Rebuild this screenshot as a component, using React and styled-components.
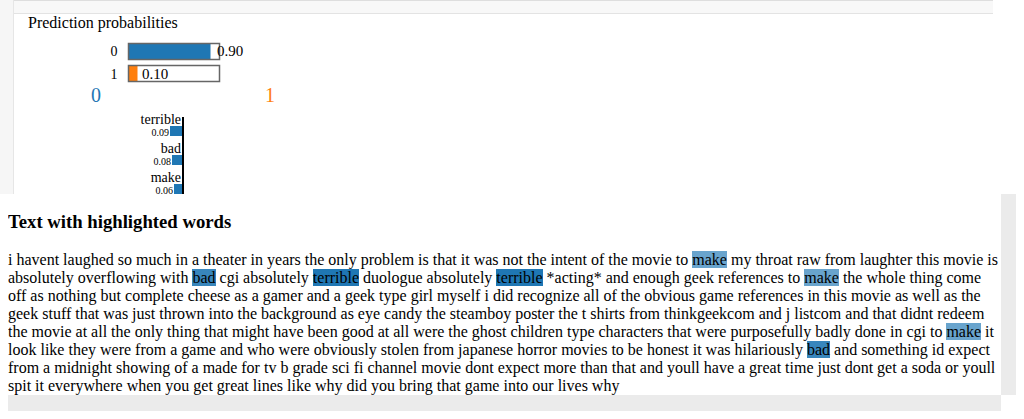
import React from "react";
import styled, { createGlobalStyle } from "styled-components";

const Global = createGlobalStyle`
  html, body { margin: 0; padding: 0; background: #ffffff; }
  body { font-family: "Liberation Serif", "Times New Roman", serif; color: #000; }
`;

const Page = styled.div`
  width: 1024px;
  height: 419px;
  overflow: hidden;
  display: flex;
  flex-direction: column;
`;

const Upper = styled.section`
  display: flex;
  height: 194px;
  flex-shrink: 0;
`;

const Gutter = styled.div`
  width: 14px;
  box-sizing: border-box;
  background: #f6f6f6;
  border-right: 1px solid #e6e6e6;
`;

const Main = styled.div`
  width: 979px;
  display: flex;
  flex-direction: column;
  background: #fff;
`;

const TopBar = styled.div`
  height: 14px;
  box-sizing: border-box;
  background: #f8f8f8;
  border-top: 1px solid #dedede;
  border-bottom: 1px solid #e3e3e3;
`;

const Title = styled.div`
  padding-left: 14px;
  font-size: 16px;
  line-height: 18px;
  height: 18px;
`;

const ChartSvg = styled.svg`
  display: block;
  overflow: visible;
  font-family: "Liberation Serif", "Times New Roman", serif;
`;

const Lower = styled.section`
  margin-left: 8px;
  display: grid;
  grid-template-columns: 993px 15px;
  grid-template-rows: 201px 16px;
`;

const TextPanel = styled.div`
  background: #fff;
  overflow: hidden;
`;

const Track = styled.div`
  background: ${(p) => (p.$corner ? "#fff" : "#ebebeb")};
`;

const Heading = styled.h3`
  margin: 17px 0 18px;
  font-size: 18.72px;
  line-height: 21.5px;
  font-weight: bold;
`;

const Body = styled.div`
  font-size: 16px;
  line-height: 18px;
`;

const Mark = styled.span`
  background-color: rgba(31, 119, 180, ${(p) => p.$alpha});
`;

const BLUE = "#1f77b4";
const ORANGE = "#ff7f0e";

function ProbChart() {
  return (
    <ChartSvg width="300" height="74">
      <text x="103.5" y="24" fontSize="14" textAnchor="end">0</text>
      <rect x="114.5" y="11.5" width="82" height="16" fill={BLUE} />
      <rect x="114.5" y="11.5" width="91" height="16" fill="none" stroke="#666" strokeWidth="1.5" />
      <text x="203" y="24" fontSize="15">0.90</text>
      <text x="103.5" y="47" fontSize="14" textAnchor="end">1</text>
      <rect x="114.5" y="33.5" width="9" height="16" fill={ORANGE} />
      <rect x="114.5" y="33.5" width="91" height="16" fill="none" stroke="#666" strokeWidth="1.5" />
      <text x="128" y="47" fontSize="15">0.10</text>
      <text x="77" y="70" fontSize="20" fill={BLUE}>0</text>
      <text x="251" y="70" fontSize="20" fill={ORANGE}>1</text>
    </ChartSvg>
  );
}

const features = [
  { name: "terrible", value: "0.09", w: 12 },
  { name: "bad", value: "0.08", w: 10 },
  { name: "make", value: "0.06", w: 8 },
];

function FeatureChart() {
  return (
    <ChartSvg width="300" height="88">
      {features.map((f, i) => {
        const y = i * 29;
        return (
          <g key={f.name}>
            <text x="167" y={18 + y} fontSize="14" textAnchor="end">{f.name}</text>
            <rect x={168 - f.w} y={20 + y} width={f.w} height="10" fill={BLUE} />
            <text x={167 - f.w} y={30 + y} fontSize="10" textAnchor="end">{f.value}</text>
          </g>
        );
      })}
      <line x1="169" y1="11" x2="169" y2="88" stroke="#000" strokeWidth="2" />
    </ChartSvg>
  );
}

const segments = [
  "i havent laughed so much in a theater in years the only problem is that it was not the intent of the movie to ",
  ["make", 0.67],
  " my throat raw from laughter this movie is absolutely overflowing with ",
  ["bad", 0.89],
  " cgi absolutely ",
  ["terrible", 1],
  " duologue absolutely ",
  ["terrible", 1],
  " *acting* and enough geek references to ",
  ["make", 0.67],
  " the whole thing come off as nothing but complete cheese as a gamer and a geek type girl myself i did recognize all of the obvious game references in this movie as well as the geek stuff that was just thrown into the background as eye candy the steamboy poster the t shirts from thinkgeekcom and j listcom and that didnt redeem the movie at all the only thing that might have been good at all were the ghost children type characters that were purposefully badly done in cgi to ",
  ["make", 0.67],
  " it look like they were from a game and who were obviously stolen from japanese horror movies to be honest it was hilariously ",
  ["bad", 0.89],
  " and something id expect from a midnight showing of a made for tv b grade sci fi channel movie dont expect more than that and youll have a great time just dont get a soda or youll spit it everywhere when you get great lines like why did you bring that game into our lives why",
];

export default function App() {
  return (
    <>
      <Global />
      <Page>
        <Upper>
          <Gutter />
          <Main>
            <TopBar />
            <Title>Prediction probabilities</Title>
            <ProbChart />
            <FeatureChart />
          </Main>
        </Upper>
        <Lower>
          <TextPanel>
            <Heading>Text with highlighted words</Heading>
            <Body>
              {segments.map((s, i) =>
                typeof s === "string" ? (
                  <React.Fragment key={i}>{s}</React.Fragment>
                ) : (
                  <Mark key={i} $alpha={s[1]}>{s[0]}</Mark>
                )
              )}
            </Body>
          </TextPanel>
          <Track />
          <Track />
          <Track $corner />
        </Lower>
      </Page>
    </>
  );
}
